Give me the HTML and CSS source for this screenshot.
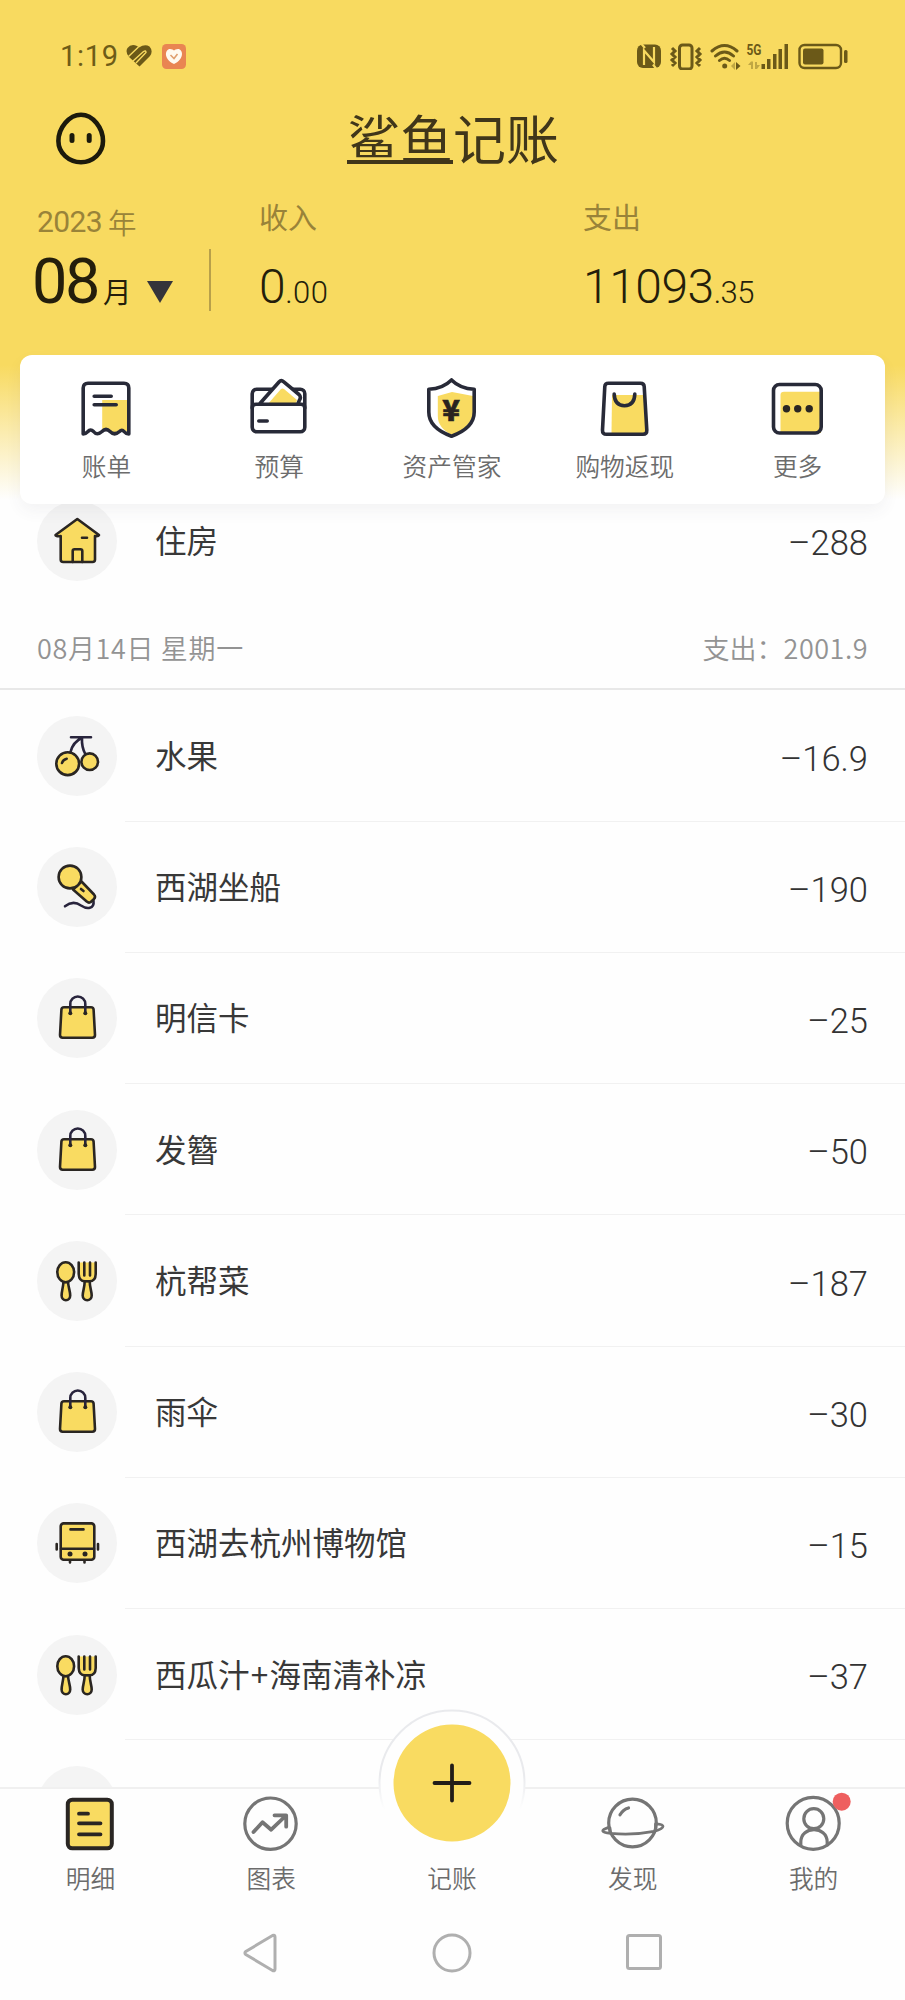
FILE: index.html
```html
<!DOCTYPE html>
<html lang="zh-CN">
<head>
<meta charset="utf-8">
<title>鲨鱼记账</title>
<link rel="stylesheet" href="styles.css">
</head>
<body>
<svg class="sprite" aria-hidden="true">
  <symbol id="bag" viewBox="0 0 80 80">
    <path class="fill ink" d="M27 29.3H54Q56.4 29.3 56.6 31.7L58 57Q58 59.7 55.3 59.7H25.700Q23 59.700 23 57L24.400 31.700Q24.600 29.300 27 29.300Z"/>
    <path class="ink none navy" d="M33.300 35V26A7.500 7.500 0 0 1 48.300 26V35"/>
    <circle cx="33.300" cy="35.300" r="2"/><circle cx="48.300" cy="35.300" r="2"/>
  </symbol>
  <symbol id="cutlery" viewBox="0 0 80 80">
    <path class="fill ink" d="M26.500 41C26 47 24.600 50 24.600 54.500A4.300 4.700 0 0 0 33.200 54.500C33.200 50 31.500 47 31 41Z"/>
    <ellipse class="fill ink" cx="28.700" cy="31.200" rx="8.400" ry="10"/>
    <path class="fill ink" d="M47.700 40C47.700 47 45.700 50 45.700 54.500A4.500 4.700 0 0 0 54.700 54.500C54.700 50 52.700 47 52.700 40Z"/>
    <path class="fill ink" d="M41.700 21.500V33Q42 40.300 48 40.300H52.500Q58.500 40.300 58.700 33V21.500"/>
    <path class="ink none" d="M47.300 21.500V34.500M53 21.500V34.500"/>
  </symbol>
</svg>
<div class="screen">
  <header class="header">
    <div class="status">
      <span class="time">1:19</span>
      <svg class="heart" width="26" height="24" viewBox="0 0 26 24">
        <path class="status-fill" d="M3 13Q-1 8 1.500 4Q5-.500 11 2L13 3.500Q19-.500 23.500 2.500Q27.500 7 24 12L13.500 22.500Z"/>
        <path class="cut" d="M2.500 12.500L12.500 3M7 17L17.500 7.500Q20 6 20 8.500L10 19"/>
      </svg>
      <svg class="badge" width="24" height="25" viewBox="0 0 24 25">
        <rect width="24" height="25" rx="4.500" fill="#e98552"/>
        <path d="M12 20C1 15 3 5 8 5Q11 5 12 6.500Q13 5 16 5C21 5 23 15 12 20Z" fill="#fffaf0"/>
        <path d="M8.500 11L12 14.500L15.500 10" fill="none" stroke="#e0a070" stroke-width="1.600"/>
      </svg>
      <svg class="signals" width="212" height="28" viewBox="0 0 212 28">
        <rect class="status-fill" x="1" y="2.500" width="24" height="23.500" rx="6"/>
        <path class="cut thin" d="M8 23V8.500L18 20V5M5.500 2L9 6M17 22.500L20 26.500"/>
        <rect class="status-line" x="43.500" y="3" width="12.500" height="24" rx="3"/>
        <path class="status-line" d="M36 6L39 9L36 12L39 15L36 18L39 21L36 24M64 6L61 9L64 12L61 15L64 18L61 21L64 24" stroke-width="2"/>
        <path class="status-line round" d="M76 9Q88.500-2 101 9M79.500 14Q88.500 6 97.500 14M83.500 18.500Q88.500 14 93.500 18.500" stroke-width="3"/>
        <circle class="status-fill" cx="88.700" cy="24" r="2.500"/>
        <path class="status-fill" d="M100 20L104.500 24L100 28Z"/><path class="status-fill faint" d="M99 20L95 24L99 28Z"/>
        <text class="five-g" x="110.500" y="12.500" textLength="15" lengthAdjust="spacingAndGlyphs">5G</text>
        <path class="status-fill faint" d="M112 23L115 19.500H117V27H115V23ZM124 23L121 27H119V20H121V23Z"/>
        <path class="status-fill" d="M125.500 22H129V27H125.500ZM131 17H134.500V27H131ZM137 12H140.500V27H137ZM142.500 7H146V27H142.500ZM148.500 2H152V27H148.500Z"/>
        <rect class="status-line thin" x="163.500" y="3" width="41.500" height="23" rx="5"/>
        <rect class="status-fill" x="167" y="6.500" width="20.500" height="16" rx="2"/>
        <rect class="status-fill" x="208" y="8" width="3.500" height="13" rx="1.500"/>
      </svg>
    </div>
    <div class="titlebar">
      <svg class="face" width="52" height="54" viewBox="0 0 52 54">
        <path d="M26 2.700C38 2.700 48 16 48 29C48 41 38 50.200 26 50.200S3.400 41 3.400 29C3.400 16 14 2.700 26 2.700Z" fill="none" stroke="#1c1a0c" stroke-width="4.600"/>
        <path d="M17 23.500V28.500M34.200 23.500V28.500" stroke="#1c1a0c" stroke-width="5" stroke-linecap="round"/>
      </svg>
      <h1 class="brand"><span class="brand-line">鲨鱼</span>记账</h1>
    </div>
    <div class="summary">
      <div class="month">
        <div class="year"><span>2023</span>年</div>
        <div class="month-value"><b>08</b><span>月</span><i class="caret"></i></div>
      </div>
      <div class="total income">
        <div class="total-label">收入</div>
        <div class="total-value">0<small>.00</small></div>
      </div>
      <div class="total">
        <div class="total-label">支出</div>
        <div class="total-value">11093<small>.35</small></div>
      </div>
    </div>
  </header>

  <nav class="quick">
    <a class="quick-item">
      <svg width="60" height="60" viewBox="0 0 60 60">
        <path class="fill" d="M26.200 22H52V54L46 51L38.500 55L29.500 51L26.200 53Z"/>
        <path class="q" d="M7.200 56V10Q7.200 5.300 12 5.300H48Q52.800 5.300 52.800 10V56Q50 56 48 53.500Q46 51 43.500 53.500Q38.500 58 34 53.500Q30 49.500 26 53.500Q21 58 17.500 53.500Q14.500 50.500 12 53.500Q9.500 56 7.200 56ZM18.200 18.300H35.200M18.200 26.700H40.200"/>
      </svg>账单</a>
    <a class="quick-item">
      <svg width="60" height="60" viewBox="0 0 60 60">
        <rect class="q" x="3.200" y="11.300" width="52.600" height="42.400" rx="4.500"/>
        <path d="M10.500 26L30 4Q32.200 1.600 34.500 3.700L50 16.500Q52.500 19 50.500 22L48.800 26Z" fill="#fff"/>
        <path class="fill" d="M19.800 25L32 11Q33.500 10 35 11L48 22L47 25Z"/>
        <path class="q" d="M10.500 26L30 4Q32.200 1.600 34.500 3.700L50 16.500Q52.500 19 50.500 22L48.800 26M3.200 30Q3.200 26.300 7 26.300H52Q55.800 26.300 55.800 30M9.800 43H18.200"/>
      </svg>预算</a>
    <a class="quick-item">
      <svg width="60" height="60" viewBox="0 0 60 60">
        <path class="fill" d="M15.800 18L30 14L51 18V36Q48 50 30 57Q15.800 50 15.800 38Z"/>
        <path class="q" d="M29.500 1.900Q38 10.500 52.200 11.300V34Q52.200 50 29.500 58.200Q6.800 50 6.800 34V11.300Q21 10.500 29.500 1.900Z"/>
        <text class="yen" x="29.200" y="42.500">¥</text>
      </svg>资产管家</a>
    <a class="quick-item">
      <svg width="60" height="60" viewBox="0 0 60 60">
        <path class="fill" d="M17 17H49L51 56H16.500Z"/>
        <path class="q" d="M13.500 5.300H45.500Q49 5.300 49.200 8.500L51.800 52Q52 56.300 48 56.300H11.500Q7.300 56.300 7.500 52L9.800 8.500Q10 5.300 13.500 5.300ZM19.200 16Q19.500 27.700 29.500 27.700T39.800 16"/>
      </svg>购物返现</a>
    <a class="quick-item">
      <svg width="60" height="60" viewBox="0 0 60 60">
        <path class="fill" d="M12.500 55V17Q12.500 13.700 16 13.700H53V55Z"/>
        <rect class="q" x="5.500" y="6.500" width="47.700" height="48.500" rx="6"/>
        <g fill="#2a2623"><circle cx="18.500" cy="30.700" r="3.700"/><circle cx="29.700" cy="30.700" r="3.700"/><circle cx="41.200" cy="30.700" r="3.700"/></g>
      </svg>更多</a>
  </nav>

  <main class="list">
    <div class="row last">
      <svg class="row-icon" viewBox="0 0 80 80">
        <path class="fill ink" d="M40.300 18L62 34Q61.500 35.500 58 35V58.500Q58 61 55.500 61H26.200Q23.700 61 23.700 58.500V35Q19 35.500 18.500 34Z"/>
        <path class="ink none" d="M35.700 61V50Q35.700 48.300 37.500 48.300H43.500Q45.300 48.300 45.300 50V61M45 36.700H50"/>
      </svg>
      <span class="name">住房</span><span class="amount">–288</span>
    </div>
    <div class="day"><span class="date">08月14日 星期一</span><span>支出：<em>2001.9</em></span></div>
    <div class="row">
      <svg class="row-icon" viewBox="0 0 80 80">
        <path class="ink none navy" d="M34 21.300H54M44.700 22Q36 26 33.500 36M45 22Q44.500 31 48.300 38"/>
        <circle class="fill ink" cx="30.700" cy="47.700" r="11.400"/><circle class="fill ink" cx="52.700" cy="45.700" r="8.300"/>
        <path class="ink none" d="M25 47Q26 43.500 29.700 42.700"/>
      </svg>
      <span class="name">水果</span><span class="amount">–16.9</span>
    </div>
    <div class="row">
      <svg class="row-icon" viewBox="0 0 80 80">
        <path class="ink none navy" d="M28 59.300C34 54.500 39 55 44 58.500C50 62.500 57.500 62 56.500 54"/>
        <path class="fill ink" d="M44.500 34.500L57 47.500Q59 49.700 57 52L53.500 55.200Q51.500 56.200 50 54.700L36 42.500Z"/>
        <circle class="fill ink" cx="33" cy="30" r="11.400"/><path class="ink none" d="M44 42L46.500 44"/>
      </svg>
      <span class="name">西湖坐船</span><span class="amount">–190</span>
    </div>
    <div class="row"><svg class="row-icon"><use href="#bag"/></svg><span class="name">明信卡</span><span class="amount">–25</span></div>
    <div class="row"><svg class="row-icon"><use href="#bag"/></svg><span class="name">发簪</span><span class="amount">–50</span></div>
    <div class="row"><svg class="row-icon"><use href="#cutlery"/></svg><span class="name">杭帮菜</span><span class="amount">–187</span></div>
    <div class="row"><svg class="row-icon"><use href="#bag"/></svg><span class="name">雨伞</span><span class="amount">–30</span></div>
    <div class="row">
      <svg class="row-icon" viewBox="0 0 80 80">
        <path class="ink none" d="M19.700 41V46.500M61 41V46.500M33 58V59.500M47.500 58V59.500"/>
        <rect class="fill ink" x="23.700" y="20.400" width="33.600" height="36.300" rx="3"/>
        <path class="ink none" d="M33.500 26.400H46.500M24 45.700H57"/>
        <circle cx="33" cy="51" r="2.500"/><circle cx="48" cy="51" r="2.500"/>
      </svg>
      <span class="name">西湖去杭州博物馆</span><span class="amount">–15</span>
    </div>
    <div class="row"><svg class="row-icon"><use href="#cutlery"/></svg><span class="name">西瓜汁<span class="plus">+</span>海南清补凉</span><span class="amount">–37</span></div>
    <div class="row"><svg class="row-icon"></svg></div>
  </main>

  <footer class="tabs">
    <a class="tab">
      <svg width="64" height="64" viewBox="0 0 64 64">
        <rect x="9.800" y="7.700" width="44" height="48.600" rx="4.500" fill="#f9db61" stroke="#2a2623" stroke-width="4"/>
        <path d="M21 21.700H30M21 31.300H42.500M21 42.300H42.500" stroke="#2a2623" stroke-width="3.800" stroke-linecap="round"/>
      </svg>明细</a>
    <a class="tab">
      <svg class="gray" width="64" height="64" viewBox="0 0 64 64">
        <circle cx="31.500" cy="31.700" r="25.700"/><path d="M14.500 40L23.500 30.200L32.200 37.700L46.500 24M35.500 23.300H47.200V34.700" stroke-width="3.800"/>
      </svg>图表</a>
    <a class="tab"><span class="tab-space"></span>记账
      <svg class="fab" width="148" height="148" viewBox="0 0 148 148">
        <defs><linearGradient id="rim" x1="0" y1="0" x2="0" y2="1"><stop offset=".45" stop-color="#e9eaed"/><stop offset=".68" stop-color="#fefefe"/></linearGradient></defs>
        <circle cx="74" cy="74" r="72.500" fill="#fefefe" stroke="url(#rim)" stroke-width="2"/>
        <circle cx="74" cy="74" r="58.500" fill="#f9db61"/>
        <path d="M56.500 74H91.500M74 56.500V91.500" stroke="#221d18" stroke-width="3.800" stroke-linecap="round"/>
      </svg>
    </a>
    <a class="tab">
      <svg class="gray" width="64" height="64" viewBox="0 0 64 64">
        <circle cx="31.500" cy="31" r="23.800"/>
        <path d="M7.600 35.300Q1.500 37.300 1.800 39T10 41.300Q31 43.500 53 39.300Q62 37 62 34.300Q62 32.300 55.500 31.800M9 36V41M54.500 32V38" stroke-width="2.800"/><path d="M19 22.800Q22 17.500 27.500 16"/>
      </svg>发现</a>
    <a class="tab">
      <svg class="gray" width="76" height="64" viewBox="-6 0 76 64">
        <circle cx="31.200" cy="31.300" r="26"/><circle cx="31.800" cy="26.700" r="10"/><path d="M18.800 53V50C19 33.500 45 33.500 45.200 50V53"/>
        <circle cx="59.700" cy="9.700" r="9" fill="#ee5f5f" stroke="none"/>
      </svg>我的</a>
  </footer>
  <div class="system">
    <svg width="34" height="40" viewBox="0 0 34 40"><path d="M29.500 2.500Q32 1.500 32 4V36Q32 38.500 29.500 37.500L2.800 21.500Q1 20 2.800 18.500Z"/></svg>
    <svg width="40" height="40" viewBox="0 0 40 40"><circle cx="20" cy="20" r="18"/></svg>
    <svg class="recent" width="36" height="36" viewBox="0 0 36 36"><rect x="1.500" y="1.500" width="33" height="33" rx="2"/></svg>
  </div>
</div>
</body>
</html>
```
FILE: styles.css
```css
* { box-sizing: border-box; }
body { margin: 0; font-family: "Noto Sans CJK SC", sans-serif; background: #fefefe; }
.sprite { position: absolute; width: 0; height: 0; }
.screen {
  width: 905px; height: 2000px; overflow: hidden;
  display: flex; flex-direction: column;
  background: linear-gradient(#f8da60 0, #f8da60 365px, #fefefe 500px);
}
.header { height: 355px; flex: none; }

.status { height: 112px; padding: 0 57px 0 60px; display: flex; align-items: center; }
.time { font: 400 29px/1 Roboto, sans-serif; letter-spacing: .700px; color: #6e5c17; width: 66px; }
.badge { margin-left: 10px; }
.signals { margin-left: auto; }
.status-fill { fill: #6b5918; }
.status-line { fill: none; stroke: #6b5918; stroke-width: 3; }
.status-line.thin { stroke-width: 2.400; }
.round { stroke-linecap: round; }
.faint { opacity: .4; }
.cut { fill: none; stroke: #f8da60; stroke-width: 1.400; }
.cut.thin { stroke-width: 2.200; }
.five-g { font: 700 15px Roboto, sans-serif; fill: #6b5918; }

.titlebar { height: 56px; display: grid; grid-template-columns: 347px 1fr; align-items: center; }
.face { margin-left: 55px; margin-top: -2px; }
.brand { margin: -4px 0 0; font-size: 53px; line-height: 50px; font-weight: 400; color: #40361a; }
.brand-line { display: inline-block; height: 52px; border-bottom: 4px solid #40361a; }

.summary { display: grid; grid-template-columns: 211px 372px 1fr; padding-top: 26px; }
.summary > div { height: 130px; }
.month { padding: 10px 0 0 32px; position: relative; }
.month::after { content: ""; position: absolute; right: 0; top: 55px; width: 2px; height: 62px; background: #b8a04a; }
.year { display: flex; align-items: center; gap: 6px; padding-left: 5px; height: 36px; font-size: 28.500px; line-height: 34px; font-weight: 350; color: #998339; }
.year span { font: 400 30px/36px Roboto, sans-serif; letter-spacing: -.600px; }
.month-value { display: flex; align-items: baseline; color: #241e0b; line-height: 70px; margin-top: 7px; }
.month-value b { font: 400 63px/70px Roboto, sans-serif; letter-spacing: -2.500px; width: 71px; }
.month-value span { font-size: 28.500px; }
.caret { border: 13px solid transparent; border-top: 22px solid #35343a; border-bottom: 0; margin-left: 15px; }
.total { color: #241e0b; }
.income { padding-left: 48px; }
.total-label { font-size: 29px; line-height: 44px; color: #998339; }
.total-value { font: 300 48px/60px Roboto, sans-serif; letter-spacing: -.500px; margin-top: 19px; }
.total-value small { font-size: 31px; }
.income small { letter-spacing: .500px; }

.quick {
  height: 149px; flex: none; margin: 0 20px; padding-right: 1px; display: flex; position: relative; z-index: 1;
  background: #fff; border-radius: 12px; box-shadow: 0 7px 16px rgba(60, 60, 80, .06);
}
.quick-item { flex: 1; display: flex; flex-direction: column; align-items: center; padding-top: 23px; font-size: 24.700px; line-height: 55px; font-weight: 350; color: #6c6c6c; }
.fill { fill: #f9db61; }
.q { fill: none; stroke: #282a38; stroke-width: 3.600; stroke-linejoin: round; stroke-linecap: round; }
.yen { font: 900 29px "Noto Sans CJK SC", sans-serif; text-anchor: middle; fill: #29231f; stroke: #29231f; stroke-width: .600; }

.list { height: 1312px; flex: none; margin-top: -29px; overflow: hidden; }
.row { height: 131.250px; display: flex; align-items: center; padding: 0 37px; position: relative; }
.row:not(.last)::after { content: ""; position: absolute; left: 125px; right: 0; bottom: 0; height: 1px; background: #f1f1f1; }
.row-icon { width: 80px; height: 80px; border-radius: 50%; background: #f4f4f4; flex: none; fill: #292522; }
.ink { stroke: #2a2622; stroke-width: 2.600; stroke-linecap: round; stroke-linejoin: round; }
.row-icon .fill, .sprite .fill { fill: #f9db61; }
.none { fill: none; }
.navy { stroke: #28243c; }
.name { margin-left: 38px; flex: 1; font-size: 31.500px; color: #383838; padding-bottom: 4px; }
.plus { padding: 0 1.300px; }
.amount { font: 300 34.500px/1 Roboto, sans-serif; color: #333; padding-top: 6px; }
.day { height: 84px; border-bottom: 2px solid #e8e8e8; display: flex; justify-content: space-between; align-items: center; padding: 0 37px; font-size: 27px; font-weight: 350; color: #939393; }
.date { letter-spacing: .650px; }
.day em { font-style: normal; font-weight: 350; letter-spacing: .500px; }

.tabs { height: 127px; flex: none; display: flex; border-top: 2px solid #f0f0f0; background: #fefefe; position: relative; z-index: 2; }
.tab { flex: 1; display: flex; flex-direction: column; align-items: center; padding-top: 3px; font-size: 24.700px; line-height: 43px; font-weight: 350; color: #6c6c6c; position: relative; }
.tabs { padding-right: 1px; }
.tab-space { height: 64px; }
.tab svg { flex: none; }
.fab { position: absolute; top: -80px; left: 16.500px; }
.gray { fill: none; stroke: #757575; stroke-width: 3.200; stroke-linecap: round; stroke-linejoin: round; }
.system { flex: 1; display: grid; grid-template-columns: repeat(3, 192px); justify-content: center; justify-items: center; align-items: start; padding: 19px 1px 0 0; background: #fefefe; }
.system svg { fill: none; stroke: #afafaf; stroke-width: 3; }
.recent { margin-top: 1px; }
```
